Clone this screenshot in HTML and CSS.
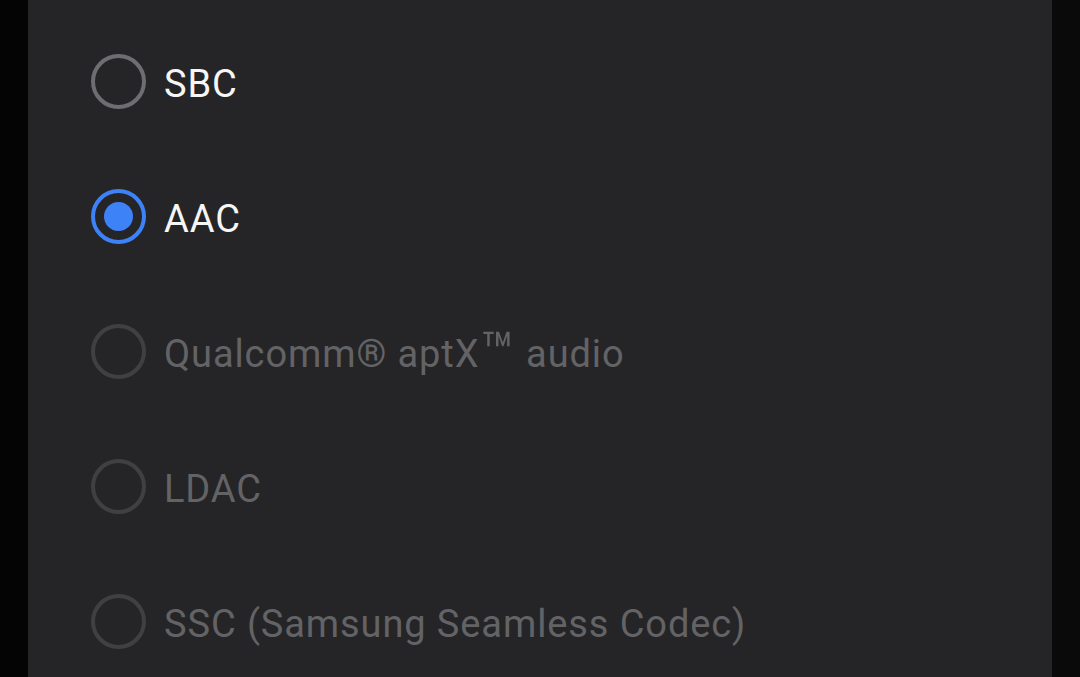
FILE: index.html
```html
<!DOCTYPE html>
<html lang="en">
<head>
    <meta charset="UTF-8">
    <meta name="viewport" content="width=device-width, initial-scale=1.0">
    <title>Bluetooth audio codec</title>
    <link rel="stylesheet" href="styles.css">
</head>
<body>
    <div class="sheet">
        <ul class="codec-list">
            <li class="codec">
                <span class="radio"></span>
                <span class="label">SBC</span>
            </li>
            <li class="codec">
                <span class="radio checked"></span>
                <span class="label">AAC</span>
            </li>
            <li class="codec disabled">
                <span class="radio"></span>
                <span class="label">Qualcomm® aptX<span class="tm">™</span> audio</span>
            </li>
            <li class="codec disabled">
                <span class="radio"></span>
                <span class="label">LDAC</span>
            </li>
            <li class="codec disabled">
                <span class="radio"></span>
                <span class="label">SSC (Samsung Seamless Codec)</span>
            </li>
        </ul>
    </div>
</body>
</html>
```

FILE: styles.css
```css
/* base */
html, body {
    margin: 0;
    height: 100%;
}
body {
    background: linear-gradient(to right, #040404 0, #040404 540px, #0a0a0a 540px);
    font-family: 'Roboto', 'Noto Sans', sans-serif;
    overflow: hidden;
}

/* dialog sheet */
.sheet {
    margin: 0 28px;
    height: 100%;
    background-color: #252527;
    padding-top: 14px;
    box-sizing: border-box;
}

/* list */
.codec-list {
    list-style: none;
    margin: 0;
    padding: 0;
}
.codec {
    height: 135px;
    display: flex;
    align-items: center;
    gap: 18px;
    padding-left: 63px;
}

/* radio button */
.radio {
    width: 55px;
    height: 55px;
    box-sizing: border-box;
    border: 4px solid #6e6e72;
    border-radius: 50%;
    display: flex;
    align-items: center;
    justify-content: center;
    flex-shrink: 0;
}
.radio.checked {
    border-color: #3d82f6;
}
.radio.checked::after {
    content: '';
    width: 29px;
    height: 29px;
    border-radius: 50%;
    background-color: #3d82f6;
}

/* label */
.label {
    font-size: 38px;
    color: #f6f6f6;
    letter-spacing: 0.9px;
    padding-top: 4px;
}
.label .tm {
    font-size: 1.45em;
    line-height: 0;
    vertical-align: -0.08em;
    margin-left: 1px;
}

/* disabled rows */
.codec.disabled .radio {
    border-color: #404043;
}
.codec.disabled .label {
    color: #636366;
}
```
